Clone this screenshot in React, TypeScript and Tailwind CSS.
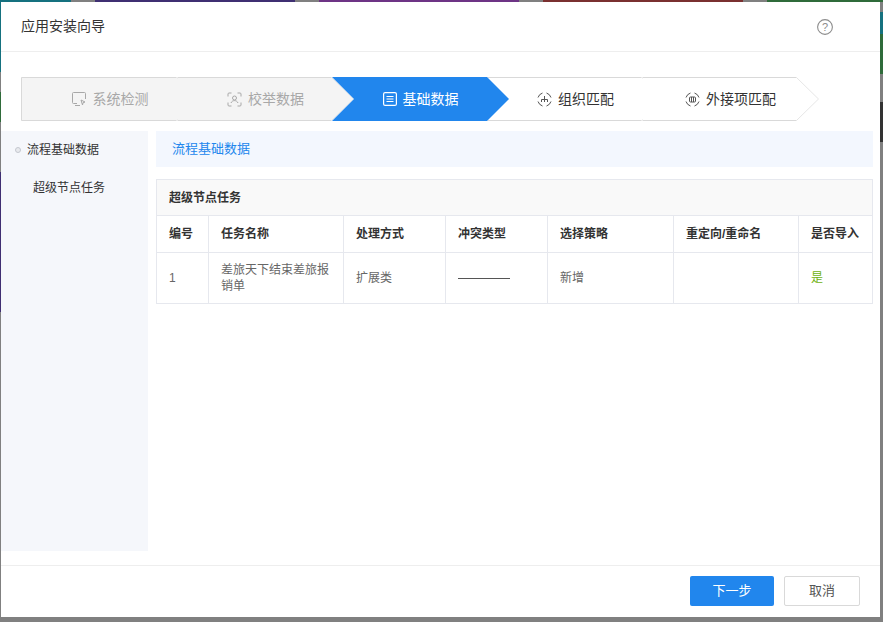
const font = "font-['Liberation_Sans','Noto_Sans_CJK_SC',sans-serif]";

const topStrip = [
  { w: "w-[71px]", c: "bg-[#15717f]" },
  { w: "w-[24px]", c: "bg-[#808080]" },
  { w: "w-[200px]", c: "bg-[#3f2f72]" },
  { w: "w-[24px]", c: "bg-[#808080]" },
  { w: "w-[200px]", c: "bg-[#6d3485]" },
  { w: "w-[24px]", c: "bg-[#808080]" },
  { w: "w-[200px]", c: "bg-[#7a3030]" },
  { w: "w-[24px]", c: "bg-[#808080]" },
  { w: "flex-1", c: "bg-[#2f6b3a]" },
];

const leftStrip = [
  { h: "h-[70px]", c: "bg-[#15717f]" },
  { h: "h-[20px]", c: "bg-[#808080]" },
  { h: "h-[30px]", c: "bg-[#2f6b3a]" },
  { h: "h-[50px]", c: "bg-[#808080]" },
  { h: "h-[140px]", c: "bg-[#3f2f72]" },
  { h: "flex-1", c: "bg-[#808080]" },
];

const rightStrip = [
  { h: "h-[10px]", c: "bg-[#808080]" },
  { h: "h-[22px]", c: "bg-[#15717f]" },
  { h: "h-[40px]", c: "bg-[#2f6b3a]" },
  { h: "h-[28px]", c: "bg-[#808080]" },
  { h: "h-[40px]", c: "bg-[#333333]" },
  { h: "flex-1", c: "bg-[#808080]" },
];

function MonitorIcon() {
  return (
    <svg width="15" height="15" viewBox="0 0 15 15" fill="none" stroke="#a8a8a8" strokeWidth="1">
      <path d="M5 11.5H1.5a1 1 0 0 1-1-1V1.5a1 1 0 0 1 1-1h11a1 1 0 0 1 1 1V7" />
      <path d="M3 13.5h5" />
      <path d="M9 8l4 2-2 .8L10.5 13z" />
    </svg>
  );
}

function FaceIcon() {
  return (
    <svg width="15" height="15" viewBox="0 0 15 15" fill="none" stroke="#a8a8a8" strokeWidth="1">
      <path d="M1 4.5V2a1 1 0 0 1 1-1h2.5M10.5 1H13a1 1 0 0 1 1 1v2.5M1 10.5V13a1 1 0 0 0 1 1h2.5M10.5 14H13a1 1 0 0 0 1-1v-2.5" />
      <circle cx="7.5" cy="6" r="2" />
      <path d="M4 11c.6-1.6 2-2.4 3.5-2.4S10.400 9.400 11 11" />
    </svg>
  );
}

function ListIcon() {
  return (
    <svg width="14" height="14" viewBox="0 0 14 14" fill="none" stroke="#ffffff" strokeWidth="1.2">
      <rect x="0.6" y="0.6" width="12.800" height="12.800" rx="1.5" />
      <path d="M3.500 4.500h7M3.500 7h7M3.500 9.500h7" />
    </svg>
  );
}

function OrgIcon() {
  return (
    <svg width="15" height="15" viewBox="0 0 15 15" fill="none" stroke="#555555" strokeWidth="1">
      <path d="M1 5.500A7 7 0 0 1 5.500 1M9.500 1A7 7 0 0 1 14 5.500M14 9.500A7 7 0 0 1 9.500 14M5.500 14A7 7 0 0 1 1 9.500" />
      <path d="M7.500 4v3M4.500 10V7.500h6V10M7.500 7.500V10" />
    </svg>
  );
}

function LinkIcon() {
  return (
    <svg width="15" height="15" viewBox="0 0 15 15" fill="none" stroke="#555555" strokeWidth="1">
      <path d="M1 5.500A7 7 0 0 1 5.500 1M9.500 1A7 7 0 0 1 14 5.500M14 9.500A7 7 0 0 1 9.500 14M5.500 14A7 7 0 0 1 1 9.500" />
      <rect x="4.500" y="5" width="6" height="5" rx="1" />
      <path d="M6.500 5v5M8.500 5v5" />
    </svg>
  );
}

// one arrow segment of the wizard, the outline is an svg drawing behind the label
function Step({
  label,
  icon,
  state,
  first,
  width,
}: {
  label: string;
  icon: React.ReactNode;
  state: "done" | "active" | "todo";
  first?: boolean;
  width: number;
}) {
  const h = 44;
  const tip = 22;
  const fill = state === "done" ? "#f4f4f4" : state === "active" ? "#2186ed" : "#ffffff";
  const outer = `M0.5 0.5H${width - tip - 0.5}L${width - 0.5} ${h / 2}L${width - tip - 0.5} ${h - 0.5}H0.5`;
  const active = `M0 0H${width - tip}L${width} ${h / 2}L${width - tip} ${h}H0L${tip} ${h / 2}Z`;
  const text =
    state === "done" ? "text-[#a8a8a8]" : state === "active" ? "text-white" : "text-[#333333]";
  return (
    <div className="relative h-[44px] shrink-0" style={{ width: width - tip }}>
      <svg
        width={width}
        height={h}
        viewBox={`0 0 ${width} ${h}`}
        className={`absolute left-0 top-0 ${state === "active" ? "z-10" : ""}`}
      >
        {state === "active" ? (
          <path d={active} fill={fill} />
        ) : (
          <>
            <path d={outer + "Z"} fill={fill} stroke="none" />
            <path
              d={`M0.5 0.5H${width - tip - 0.5}M0.5 ${h - 0.5}H${width - tip - 0.500}`}
              stroke="#d9d9d9"
            />
            <path
              d={`M${width - tip - 0.5} 0.5L${width - 0.5} ${h / 2}L${width - tip - 0.5} ${h - 0.5}`}
              stroke="#e6e6e6"
              fill="none"
            />
            {first && <path d={`M0.5 0.5V${h - 0.5}`} stroke="#d9d9d9" />}
          </>
        )}
      </svg>
      <div
        className={`absolute inset-0 z-20 flex items-center justify-center gap-[6px] text-[14px] ${text}`}
        style={{ width: width }}
      >
        {icon}
        <span>{label}</span>
      </div>
    </div>
  );
}

const cols = ["w-[51px]", "w-[135px]", "w-[102px]", "w-[102px]", "w-[126px]", "w-[125px]", "flex-1"];
const head = ["编号", "任务名称", "处理方式", "冲突类型", "选择策略", "重定向/重命名", "是否导入"];

function Cell({ i, children, className }: { i: number; children?: React.ReactNode; className?: string }) {
  return (
    <div
      className={`${cols[i]} flex items-center pl-[12px] pr-[12px] ${i > 0 ? "border-l border-[#e6e8ee]" : ""} ${className ?? ""}`}
    >
      {children}
    </div>
  );
}

export default function App() {
  return (
    <div className={`flex h-[622px] w-[883px] flex-col overflow-hidden bg-[#808080] ${font}`}>
      <div className="flex h-[2px] shrink-0">
        {topStrip.map((s, i) => (
          <div key={i} className={`${s.w} ${s.c}`} />
        ))}
      </div>
      <div className="flex h-[615px] shrink-0">
        <div className="flex w-px shrink-0 flex-col">
          {leftStrip.map((s, i) => (
            <div key={i} className={`${s.h} ${s.c}`} />
          ))}
        </div>
        <div className="flex w-[879px] shrink-0 flex-col bg-white">
          <div className="flex h-[50px] shrink-0 items-center justify-between border-b border-[#eeeeee] pl-[20px] pr-[47px]">
            <span className="text-[14px] text-[#333333]">应用安装向导</span>
            <svg width="16" height="16" viewBox="0 0 16 16" fill="none">
              <circle cx="8" cy="8" r="7.400" stroke="#8c8c8c" strokeWidth="1.100" />
              <text x="8" y="12" textAnchor="middle" fontSize="11" fill="#8c8c8c" fontFamily="Liberation Sans">
                ?
              </text>
            </svg>
          </div>
          <div className="flex pl-[20px] pt-[25px]">
            <Step label="系统检测" icon={<MonitorIcon />} state="done" first width={178} />
            <Step label="校举数据" icon={<FaceIcon />} state="done" width={177} />
            <Step label="基础数据" icon={<ListIcon />} state="active" width={177} />
            <Step label="组织匹配" icon={<OrgIcon />} state="todo" width={177} />
            <Step label="外接项匹配" icon={<LinkIcon />} state="todo" width={177} />
          </div>
          <div className="flex pt-[10px]">
            <div className="h-[420px] w-[147px] shrink-0 bg-[#f5f7fb] pt-[9px] text-[12px] text-[#333333]">
              <div className="flex h-[20px] items-center pl-[14px]">
                <span className="mr-[6px] h-[6px] w-[6px] rounded-full border border-[#c4c8cf] bg-[#e8eaee]" />
                <span>流程基础数据</span>
              </div>
              <div className="mt-[18px] flex h-[20px] items-center pl-[32px]">超级节点任务</div>
            </div>
            <div className="ml-[8px] flex w-[717px] flex-col">
              <div className="flex h-[36px] items-center bg-[#f3f7fe] pl-[16px] text-[13px] text-[#2186ed]">
                流程基础数据
              </div>
              <div className="mt-[12px] border border-[#e6e8ee] text-[12px]">
                <div className="flex h-[35px] items-center bg-[#f9f9f9] pl-[12px] font-bold text-[#333333]">
                  超级节点任务
                </div>
                <div className="flex h-[37px] border-t border-[#e6e8ee] font-bold text-[#333333]">
                  {head.map((h, i) => (
                    <Cell key={h} i={i}>
                      {h}
                    </Cell>
                  ))}
                </div>
                <div className="flex h-[51px] border-t border-[#e6e8ee] text-[#666666]">
                  <Cell i={0}>1</Cell>
                  <Cell i={1}>
                    <span className="leading-[16px]">差旅天下结束差旅报销单</span>
                  </Cell>
                  <Cell i={2}>扩展类</Cell>
                  <Cell i={3}>
                    <span className="h-px w-[52px] bg-[#555555]" />
                  </Cell>
                  <Cell i={4}>新增</Cell>
                  <Cell i={5} />
                  <Cell i={6} className="text-[#6fb10f]">
                    是
                  </Cell>
                </div>
              </div>
            </div>
          </div>
          <div className="mt-[14px] flex h-[52px] shrink-0 items-start justify-end gap-[10px] border-t border-[#eeeeee] pr-[20px] pt-[10px]">
            <button className="h-[30px] w-[84px] rounded-[2px] bg-[#2186ed] text-[13px] text-white">下一步</button>
            <button className="h-[30px] w-[76px] rounded-[2px] border border-[#d9d9d9] bg-white text-[13px] text-[#555555]">
              取消
            </button>
          </div>
        </div>
        <div className="flex w-[3px] shrink-0 flex-col">
          {rightStrip.map((s, i) => (
            <div key={i} className={`${s.h} ${s.c}`} />
          ))}
        </div>
      </div>
    </div>
  );
}
